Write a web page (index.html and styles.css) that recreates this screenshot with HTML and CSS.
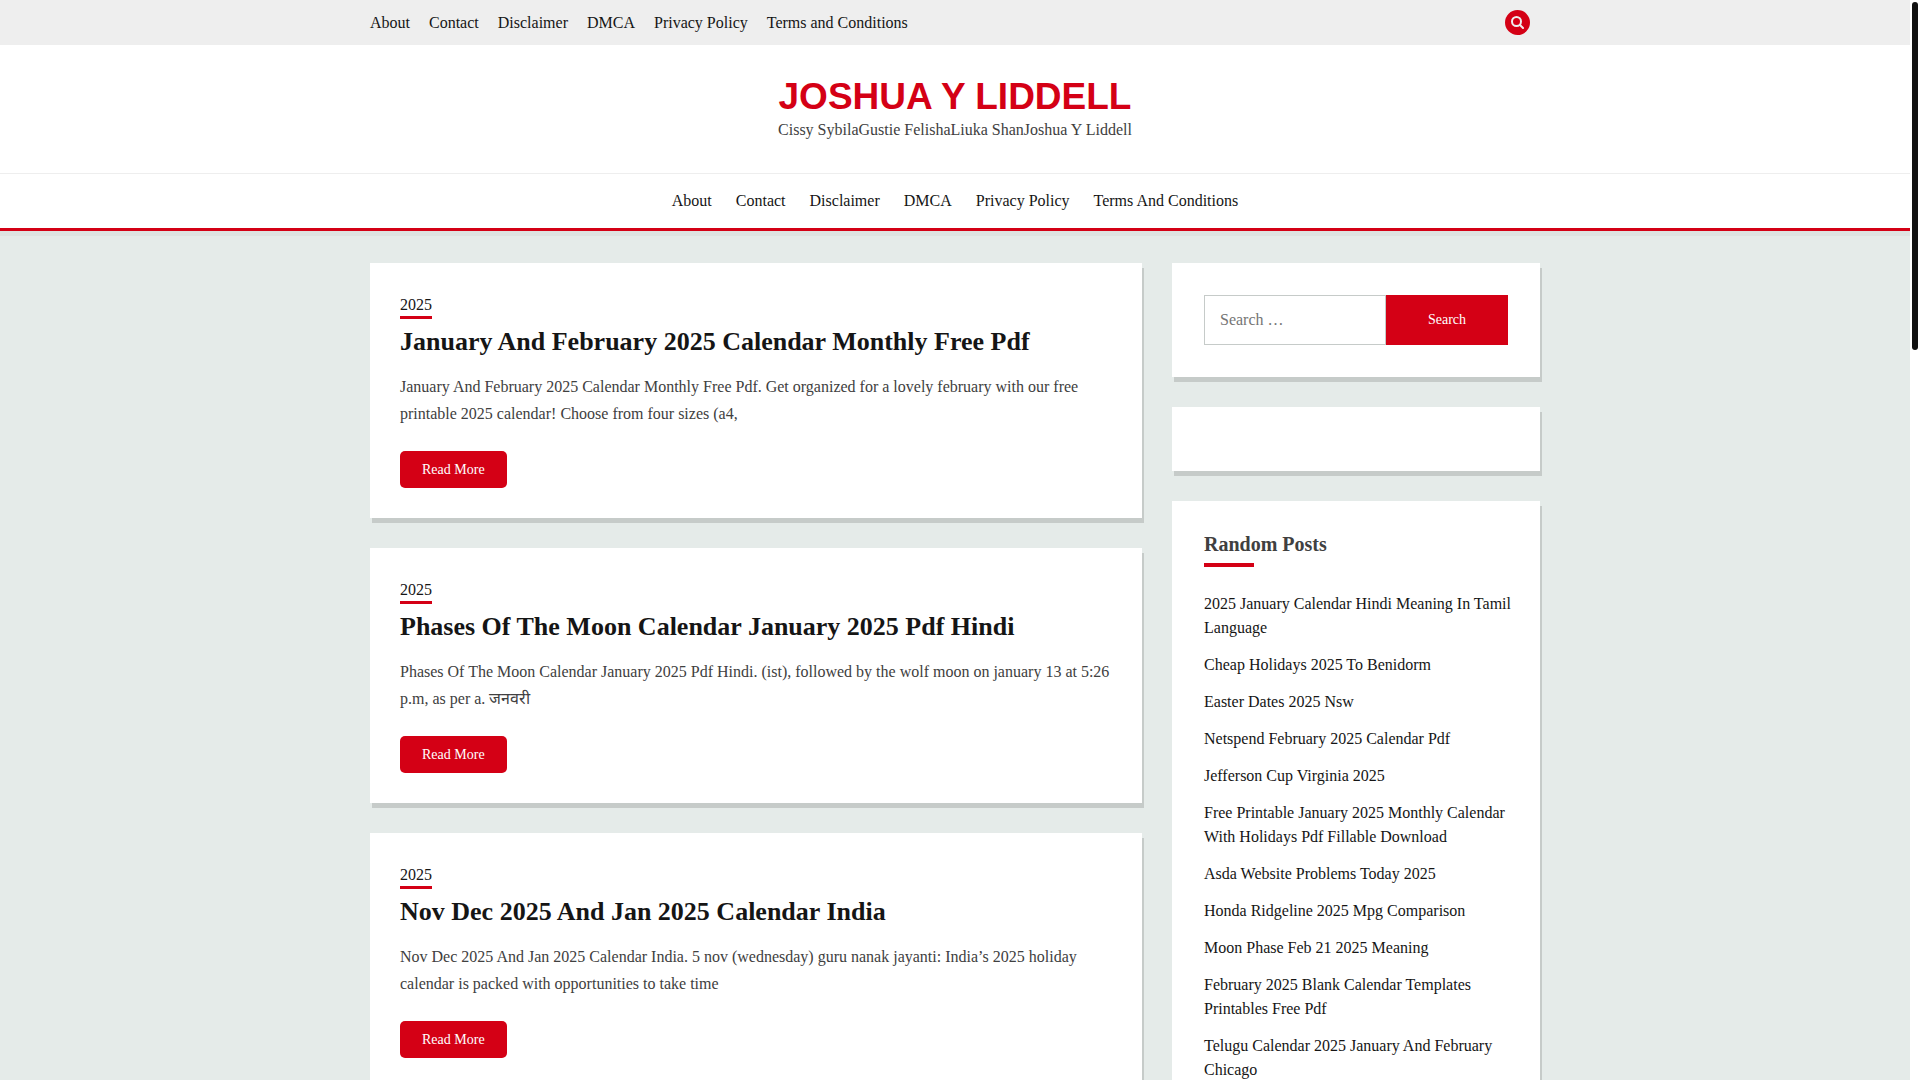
FILE: index.html
```html
<!DOCTYPE html>
<html lang="en">
<head>
  <meta charset="UTF-8">
  <meta name="viewport" content="width=device-width, initial-scale=1.0">
  <title>Joshua Y Liddell</title>
  <link rel="stylesheet" href="styles.css">
</head>
<body>
  <header class="site-header">
    <div class="top-bar">
      <div class="container top-bar-inner">
        <nav class="top-menu" aria-label="Top">
          <a href="#">About</a>
          <a href="#">Contact</a>
          <a href="#">Disclaimer</a>
          <a href="#">DMCA</a>
          <a href="#">Privacy Policy</a>
          <a href="#">Terms and Conditions</a>
        </nav>
        <button class="search-toggle" type="button" aria-label="Search">
          <svg viewBox="0 0 13 13" width="13" height="13" aria-hidden="true" fill="none" stroke="currentColor" stroke-linecap="round">
            <circle cx="5.500" cy="5.500" r="4.500" stroke-width="2"/>
            <path d="M9 9l3 3" stroke-width="2"/>
          </svg>
        </button>
      </div>
    </div>

    <div class="branding">
      <h1 class="site-title"><a href="#">JOSHUA Y LIDDELL</a></h1>
      <p class="site-description">Cissy SybilaGustie FelishaLiuka ShanJoshua Y Liddell</p>
    </div>

    <nav class="main-menu" aria-label="Main">
      <a href="#">About</a>
      <a href="#">Contact</a>
      <a href="#">Disclaimer</a>
      <a href="#">DMCA</a>
      <a href="#">Privacy Policy</a>
      <a href="#">Terms And Conditions</a>
    </nav>
  </header>

  <div class="container content">
    <main class="posts">
      <article class="card post">
        <a class="post-cat" href="#">2025</a>
        <h2 class="post-title"><a href="#">January And February 2025 Calendar Monthly Free Pdf</a></h2>
        <p class="post-text">January And February 2025 Calendar Monthly Free Pdf. Get organized for a lovely february with our free printable 2025 calendar! Choose from four sizes (a4,</p>
        <a class="read-more" href="#">Read More</a>
      </article>

      <article class="card post">
        <a class="post-cat" href="#">2025</a>
        <h2 class="post-title"><a href="#">Phases Of The Moon Calendar January 2025 Pdf Hindi</a></h2>
        <p class="post-text">Phases Of The Moon Calendar January 2025 Pdf Hindi. (ist), followed by the wolf moon on january 13 at 5:26 p.m, as per a. जनवरी</p>
        <a class="read-more" href="#">Read More</a>
      </article>

      <article class="card post">
        <a class="post-cat" href="#">2025</a>
        <h2 class="post-title"><a href="#">Nov Dec 2025 And Jan 2025 Calendar India</a></h2>
        <p class="post-text">Nov Dec 2025 And Jan 2025 Calendar India. 5 nov (wednesday) guru nanak jayanti: India’s 2025 holiday calendar is packed with opportunities to take time</p>
        <a class="read-more" href="#">Read More</a>
      </article>
    </main>

    <aside class="sidebar">
      <section class="card widget">
        <form class="search-form" onsubmit="return false">
          <input class="search-field" type="search" placeholder="Search …" aria-label="Search for">
          <button class="search-submit" type="submit">Search</button>
        </form>
      </section>

      <section class="card widget"></section>

      <section class="card widget">
        <h2 class="widget-title">Random Posts</h2>
        <ul class="widget-list">
          <li><a href="#">2025 January Calendar Hindi Meaning In Tamil Language</a></li>
          <li><a href="#">Cheap Holidays 2025 To Benidorm</a></li>
          <li><a href="#">Easter Dates 2025 Nsw</a></li>
          <li><a href="#">Netspend February 2025 Calendar Pdf</a></li>
          <li><a href="#">Jefferson Cup Virginia 2025</a></li>
          <li><a href="#">Free Printable January 2025 Monthly Calendar With Holidays Pdf Fillable Download</a></li>
          <li><a href="#">Asda Website Problems Today 2025</a></li>
          <li><a href="#">Honda Ridgeline 2025 Mpg Comparison</a></li>
          <li><a href="#">Moon Phase Feb 21 2025 Meaning</a></li>
          <li><a href="#">February 2025 Blank Calendar Templates Printables Free Pdf</a></li>
          <li><a href="#">Telugu Calendar 2025 January And February Chicago</a></li>
        </ul>
      </section>
    </aside>
  </div>

  <div class="scroll-track" aria-hidden="true"><div class="scroll-thumb"></div></div>
</body>
</html>
```
FILE: styles.css
```css
* {
  box-sizing: border-box;
}

html {
  scrollbar-width: none;
}

body {
  margin: 0;
  padding-right: 10px;
  background: #e5ebe9;
  color: #404040;
  font-family: "Liberation Serif", "Times New Roman", serif;
  font-size: 16px;
  line-height: 24px;
}

a {
  color: #151515;
  text-decoration: none;
}

a:hover {
  color: #d40015;
}

.container {
  max-width: 1200px;
  margin: 0 auto;
  padding: 0 15px;
}

/* header */
.site-header {
  background: #fff;
  border-bottom: 3px solid #d40015;
  box-shadow: 0 5px 0 #dee3e1;
}

.top-bar {
  background: #eee;
}

.top-bar-inner {
  display: flex;
  justify-content: space-between;
  align-items: center;
  padding-top: 10px;
  padding-bottom: 10px;
}

.top-menu {
  display: flex;
  flex-wrap: wrap;
  gap: 19px;
}

.search-toggle {
  display: flex;
  align-items: center;
  justify-content: center;
  width: 25px;
  height: 25px;
  margin-right: 10px;
  padding: 0;
  border: none;
  border-radius: 50%;
  background: #d40015;
  color: #eee;
  cursor: pointer;
}

.branding {
  padding: 31px 15px;
  text-align: center;
}

.site-title {
  margin: 0;
  font-family: "Liberation Sans", Arial, sans-serif;
  font-size: 37px;
  line-height: 42px;
}

.site-title a {
  color: #d40015;
}

.site-description {
  margin: 0;
}

.main-menu {
  display: flex;
  flex-wrap: wrap;
  justify-content: center;
  gap: 24px;
  padding: 15px;
  border-top: 1px solid #eee;
}

/* content */
.content {
  display: flex;
  align-items: flex-start;
  gap: 30px;
  padding-top: 32px;
  padding-bottom: 32px;
}

.posts,
.sidebar {
  display: flex;
  flex-direction: column;
  gap: 30px;
}

.posts {
  flex: 1;
}

.sidebar {
  width: 368px;
}

.card {
  background: #fff;
  box-shadow: 2px 5px 0 #c6cbc9;
}

.post {
  display: flex;
  flex-direction: column;
  align-items: flex-start;
  padding: 30px;
}

.post-cat {
  border-bottom: 3px solid #d40015;
  line-height: 23px;
}

.post-title {
  margin: 5px 0 13px;
  font-size: 26px;
  line-height: 36px;
}

.post-text {
  margin: 0 0 24px;
  line-height: 27px;
}

.read-more {
  padding: 7px 22px;
  border-radius: 5px;
  background: #d40015;
  color: #fff;
  font-size: 14px;
  line-height: 23px;
}

.read-more:hover {
  color: #fff;
}

/* sidebar */
.widget {
  padding: 32px;
}

.search-form {
  display: flex;
}

.search-field {
  flex: 1;
  min-width: 0;
  height: 50px;
  padding: 0 15px;
  border: 1px solid #c6cbc9;
  background: #fff;
  font: inherit;
}

.search-submit {
  width: 122px;
  border: none;
  background: #d40015;
  color: #fff;
  font: inherit;
  font-size: 14px;
  cursor: pointer;
}

.widget-title {
  margin: 0 0 25px;
  font-size: 20px;
  line-height: 22px;
}

.widget-title::after {
  content: "";
  display: block;
  width: 50px;
  height: 4px;
  margin-top: 8px;
  background: #d40015;
}

.widget-list {
  display: flex;
  flex-direction: column;
  gap: 13px;
  margin: 0 -8px 0 0;
  padding: 0;
  list-style: none;
}

/* page scroll indicator */
.scroll-track {
  position: fixed;
  top: 0;
  right: 0;
  bottom: 0;
  width: 10px;
  padding: 2px;
  background: #fff;
}

.scroll-thumb {
  height: 348px;
  border-radius: 3px;
  background: #111;
}

@media (max-width: 900px) {
  .content {
    flex-direction: column;
    align-items: stretch;
  }

  .sidebar {
    width: auto;
  }
}
```
